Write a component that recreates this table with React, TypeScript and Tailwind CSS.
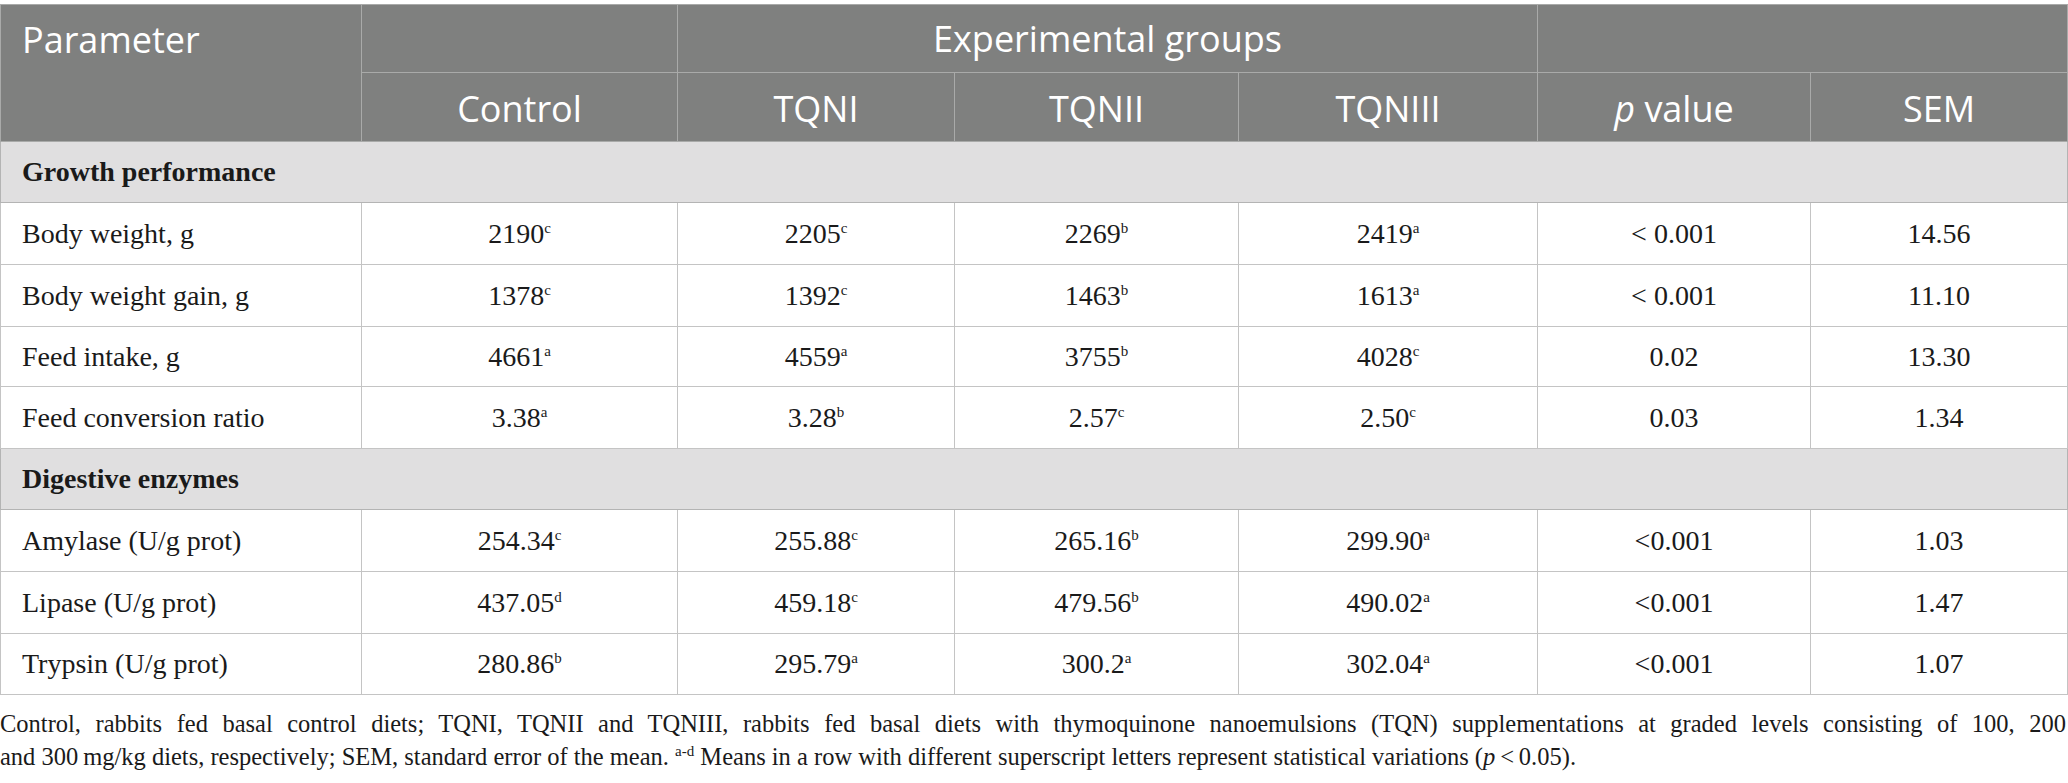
import React from "react";

type Cell = { v: string; s: string };
type Row = { label: string; cells: Cell[]; p: string; sem: string; h: string };

const growth: Row[] = [
  { label: "Body weight, g", cells: [{ v: "2190", s: "c" }, { v: "2205", s: "c" }, { v: "2269", s: "b" }, { v: "2419", s: "a" }], p: "< 0.001", sem: "14.56", h: "h-[62px]" },
  { label: "Body weight gain, g", cells: [{ v: "1378", s: "c" }, { v: "1392", s: "c" }, { v: "1463", s: "b" }, { v: "1613", s: "a" }], p: "< 0.001", sem: "11.10", h: "h-[62px]" },
  { label: "Feed intake, g", cells: [{ v: "4661", s: "a" }, { v: "4559", s: "a" }, { v: "3755", s: "b" }, { v: "4028", s: "c" }], p: "0.02", sem: "13.30", h: "h-[60px]" },
  { label: "Feed conversion ratio", cells: [{ v: "3.38", s: "a" }, { v: "3.28", s: "b" }, { v: "2.57", s: "c" }, { v: "2.50", s: "c" }], p: "0.03", sem: "1.34", h: "h-[62px]" },
];

const digestive: Row[] = [
  { label: "Amylase (U/g prot)", cells: [{ v: "254.34", s: "c" }, { v: "255.88", s: "c" }, { v: "265.16", s: "b" }, { v: "299.90", s: "a" }], p: "<0.001", sem: "1.03", h: "h-[62px]" },
  { label: "Lipase (U/g prot)", cells: [{ v: "437.05", s: "d" }, { v: "459.18", s: "c" }, { v: "479.56", s: "b" }, { v: "490.02", s: "a" }], p: "<0.001", sem: "1.47", h: "h-[62px]" },
  { label: "Trypsin (U/g prot)", cells: [{ v: "280.86", s: "b" }, { v: "295.79", s: "a" }, { v: "300.2", s: "a" }, { v: "302.04", s: "a" }], p: "<0.001", sem: "1.07", h: "h-[61px]" },
];

const serif = "font-['Minion_Pro','Liberation_Serif',serif]";
const sans = "font-['Open_Sans','Noto_Sans',sans-serif]";

function DataRow({ r }: { r: Row }) {
  return (
    <tr className={r.h}>
      <td className="border border-[#c4c4c4] pl-[21px] text-left">{r.label}</td>
      {r.cells.map((c, i) => (
        <td key={i} className="border border-[#c4c4c4] text-center">
          {c.v}
          <span className="align-super text-[15px] leading-none">{c.s}</span>
        </td>
      ))}
      <td className="border border-[#c4c4c4] text-center">{r.p}</td>
      <td className="border border-[#c4c4c4] text-center">{r.sem}</td>
    </tr>
  );
}

function SectionRow({ label, h }: { label: string; h: string }) {
  return (
    <tr className={h}>
      <td colSpan={7} className="border border-[#b4b4b4] bg-[#e0dfe0] pl-[21px] text-left font-bold">
        {label}
      </td>
    </tr>
  );
}

export default function App() {
  return (
    <div className="w-[2068px] bg-white pt-[4px]">
      <table className={`w-[2067px] table-fixed border-collapse text-[28px] text-[#1a1a1a] ${serif}`}>
        <colgroup>
          <col className="w-[361px]" />
          <col className="w-[316px]" />
          <col className="w-[277px]" />
          <col className="w-[284px]" />
          <col className="w-[299px]" />
          <col className="w-[273px]" />
          <col className="w-[257px]" />
        </colgroup>
        <thead className={`${sans} font-normal text-white text-[36px]`}>
          <tr className="h-[68px] bg-[#7f807f]">
            <th rowSpan={2} className="border border-[#a9aaa9] pl-[21px] pt-[11px] text-left align-top font-normal leading-[48px]">
              Parameter
            </th>
            <th className="border border-[#a9aaa9]"></th>
            <th colSpan={3} className="border border-[#a9aaa9] text-center font-normal">
              Experimental groups
            </th>
            <th colSpan={2} className="border border-[#a9aaa9]"></th>
          </tr>
          <tr className="h-[69px] bg-[#7f807f]">
            <th className="border border-[#a9aaa9] pt-[4px] text-center font-normal">Control</th>
            <th className="border border-[#a9aaa9] pt-[4px] text-center font-normal">TQNI</th>
            <th className="border border-[#a9aaa9] pt-[4px] text-center font-normal">TQNII</th>
            <th className="border border-[#a9aaa9] pt-[4px] text-center font-normal">TQNIII</th>
            <th className="border border-[#a9aaa9] pt-[4px] text-center font-normal">
              <i>p</i> value
            </th>
            <th className="border border-[#a9aaa9] pt-[4px] text-center font-normal">SEM</th>
          </tr>
        </thead>
        <tbody>
          <SectionRow label="Growth performance" h="h-[61px]" />
          {growth.map((r) => (
            <DataRow key={r.label} r={r} />
          ))}
          <SectionRow label="Digestive enzymes" h="h-[61px]" />
          {digestive.map((r) => (
            <DataRow key={r.label} r={r} />
          ))}
        </tbody>
      </table>
      <div className={`mt-[12px] w-[2066px] text-[24.5px] leading-[33px] text-[#1a1a1a] ${serif}`}>
        <p className="text-justify [text-align-last:justify]">
          Control, rabbits fed basal control diets; TQNI, TQNII and TQNIII, rabbits fed basal diets with thymoquinone nanoemulsions (TQN) supplementations at graded levels consisting of 100, 200
        </p>
        <p>
          and 300&#8201;mg/kg diets, respectively; SEM, standard error of the mean.{" "}
          <span className="align-super text-[15px] leading-none">a-d</span> Means in a row with different superscript letters represent statistical variations (<i>p</i>&#8201;&lt;&#8201;0.05).
        </p>
      </div>
    </div>
  );
}
